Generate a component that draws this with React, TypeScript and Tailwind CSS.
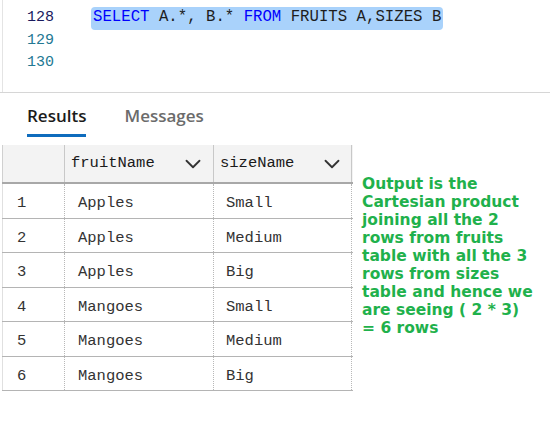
import { ChevronDown } from "lucide-react";

const rows = [
  ["1", "Apples", "Small"],
  ["2", "Apples", "Medium"],
  ["3", "Apples", "Big"],
  ["4", "Mangoes", "Small"],
  ["5", "Mangoes", "Medium"],
  ["6", "Mangoes", "Big"],
];

const noteLines = [
  "Output is the",
  "Cartesian product",
  "joining all the 2",
  "rows from fruits",
  "table with all the 3",
  "rows from sizes",
  "table and hence we",
  "are seeing ( 2 * 3)",
  "= 6 rows",
];

const mono = "font-['Liberation_Mono',monospace]";

export default function App() {
  return (
    <div className="w-[550px] h-[442px] bg-white overflow-hidden relative">
      {/* Editor */}
      <div className="h-[92px] pt-[7px] border-l border-[#e4e4e4] ml-[2px]">
        <div className={`flex h-[22.5px] items-center ${mono}`}>
          <div className="w-[88px] shrink-0 pl-[24px] text-[15px] text-[#1a1a5e]">128</div>
          <div className="h-[23px] flex items-center px-[2px] rounded-[4px] bg-[#a9d2fb] text-[15.7px] text-[#1e1e1e] whitespace-pre">
            <span className="text-[#0000ff]">SELECT</span> A.*, B.* <span className="text-[#0000ff]">FROM</span> FRUITS A,SIZES B
          </div>
        </div>
        <div className={`flex h-[22.5px] items-center ${mono}`}>
          <div className="w-[88px] shrink-0 pl-[24px] text-[15px] text-[#237893]">129</div>
        </div>
        <div className={`flex h-[22.5px] items-center ${mono}`}>
          <div className="w-[88px] shrink-0 pl-[24px] text-[15px] text-[#237893]">130</div>
        </div>
      </div>
      <div className="h-px bg-[#d6d6d6]" />

      {/* Tabs */}
      <div className="flex h-[52px] pl-[27px] font-['Open_Sans',sans-serif] text-[17px]">
        <div className="flex flex-col justify-end">
          <div className="text-[#1b1b1b] font-semibold leading-none pb-[10px]">Results</div>
          <div className="h-[3px] bg-[#0f6cbd] mb-[8px]" />
        </div>
        <div className="ml-[38px] flex flex-col justify-end">
          <div className="text-[#6b6b6b] font-semibold leading-none pb-[10px]">Messages</div>
          <div className="h-[3px] mb-[8px]" />
        </div>
      </div>

      <div className="flex">
        {/* Grid */}
        <div className={`ml-[2px] w-[351px] ${mono} text-[15.5px]`}>
          <div className="flex h-[39px] bg-[#f3f3f3] border-b-2 border-[#a8a8a8] text-[#1a1a1a]">
            <div className="w-[62px] border-l border-[#d0d0d0]" />
            <div className="w-[149px] border-l border-[#c8c8c8] flex items-center pl-[6px] pr-[7px] justify-between">
              <span>fruitName</span>
              <ChevronDown size={26} strokeWidth={1.7} className="text-[#333]" />
            </div>
            <div className="w-[139px] border-l border-r border-[#c8c8c8] flex items-center pl-[6px] pr-[6px] justify-between">
              <span>sizeName</span>
              <ChevronDown size={26} strokeWidth={1.7} className="text-[#333]" />
            </div>
          </div>
          {rows.map((r) => (
            <div key={r[0]} className="flex h-[34.5px] border-b border-[#b4b4b4] text-[#333]">
              <div className="w-[62px] border-l border-[#e0e0e0] flex items-center pt-[6px] pl-[14px]">{r[0]}</div>
              <div className="w-[149px] border-l border-dotted border-[#b8b8b8] flex items-center pt-[6px] pl-[13px]">{r[1]}</div>
              <div className="w-[139px] border-l border-r border-dotted border-[#b8b8b8] flex items-center pt-[6px] pl-[12px]">{r[2]}</div>
            </div>
          ))}
        </div>

        {/* Note */}
        <div className="ml-[9px] mt-[30px] font-['DejaVu_Sans',sans-serif] font-bold text-[15.5px] leading-[18px] text-[#1fb14c] whitespace-nowrap">
          {noteLines.map((l) => (
            <div key={l}>{l}</div>
          ))}
        </div>
      </div>
    </div>
  );
}
